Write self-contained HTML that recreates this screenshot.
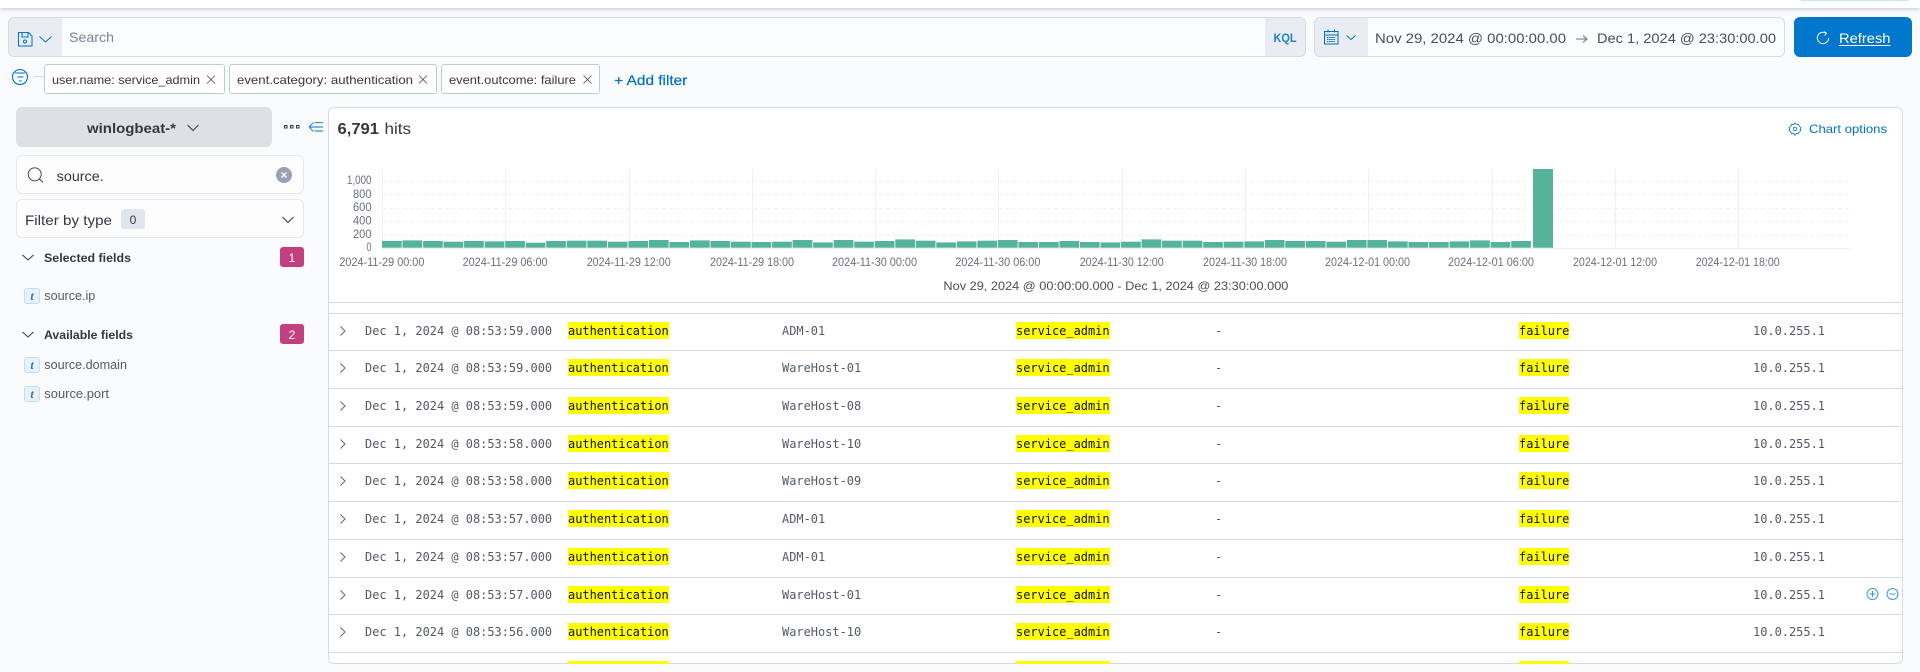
<!DOCTYPE html>
<html><head><meta charset="utf-8"><title>Discover</title>
<style>
html,body{margin:0;padding:0;width:1920px;height:672px;overflow:hidden;background:#fafbfd;font-family:"Liberation Sans",sans-serif;color:#343741}
.a{position:absolute;box-sizing:border-box}
.box{border:1px solid #d3dae6;background:#fbfcfd;border-radius:6px}
.pill{border:1px solid #c2c9d6;background:#fff;border-radius:3px;top:64px;height:30px}
.side{border:1px solid #e4e8f0;background:#fdfdfe;border-radius:6px;left:16px;width:288px}
.badge{left:280px;width:24px;height:20px;background:#c4407c;border-radius:3px}
.t{left:24px;width:16px;height:16px;background:#e6f1fa;border:1px solid #c5dcee;border-radius:3px}
.row{left:329px;width:1573px;height:38px;border-top:1px solid #d3dae6;font:11.96px/19px "DejaVu Sans Mono","Liberation Mono",monospace;color:#535966}
.row span{position:absolute;top:8px;white-space:pre;height:19px}
.row mark{display:inline-block;height:17px;line-height:19px;background:#ff0;color:#111;vertical-align:top;overflow:hidden}
.c1{left:36px}.c2{left:239px}.c3{left:453px}.c4{left:687px}.c5{left:886px}.c6{left:1190px}.c7{left:1424px}
svg text{font-family:"Liberation Sans",sans-serif}
</style></head><body>

<div class="a" style="left:0;top:0;width:1920px;height:8px;background:#fff;box-shadow:0 1px 4px rgba(120,130,160,.45)"></div>
<div class="a" style="left:1801px;top:0;width:108px;height:1px;background:#cce4f5"></div>

<div class="a box" style="left:8px;top:17px;width:1298px;height:40px;overflow:hidden">
  <div class="a" style="left:0;top:0;width:53px;height:40px;background:#e9edf3"></div>
  <div class="a" style="right:0;top:0;width:40px;height:40px;background:#e9edf3"></div>
</div>
<div class="a box" style="left:1314px;top:17px;width:471px;height:40px;overflow:hidden">
  <div class="a" style="left:0;top:0;width:53px;height:40px;background:#e9edf3"></div>
</div>
<div class="a" style="left:1794px;top:17px;width:118px;height:40px;background:#0077cc;border-radius:6px"></div>

<div class="a pill" style="left:44px;width:181px"></div>
<div class="a pill" style="left:229px;width:208px"></div>
<div class="a pill" style="left:441px;width:159px"></div>

<div class="a" style="left:16px;top:107px;width:256px;height:40px;background:#dfe0e4;border-radius:6px"></div>
<div class="a side" style="top:155px;height:39px"></div>
<div class="a side" style="top:199px;height:39px"></div>
<div class="a" style="left:121px;top:209px;width:24px;height:20px;background:#e0e5ee;border-radius:3px"></div>
<div class="a badge" style="top:247px"></div>
<div class="a badge" style="top:324px"></div>
<div class="a t" style="top:288px"></div>
<div class="a t" style="top:357px"></div>
<div class="a t" style="top:386px"></div>

<div class="a" style="left:328px;top:107px;width:1575px;height:557px;background:#fff;border:1px solid #d3dae6;border-radius:6px;overflow:hidden">
  <div class="a" style="left:0;top:194px;width:1573px;height:1px;background:#d3dae6"></div>
</div>

<div class="a row" style="top:313px"><span class="c1">Dec 1, 2024 @ 08:53:59.000</span><span class="c2"><mark>authentication</mark></span><span class="c3">ADM-01</span><span class="c4"><mark>service_admin</mark></span><span class="c5">-</span><span class="c6"><mark>failure</mark></span><span class="c7">10.0.255.1</span></div>
<div class="a row" style="top:350px"><span class="c1">Dec 1, 2024 @ 08:53:59.000</span><span class="c2"><mark>authentication</mark></span><span class="c3">WareHost-01</span><span class="c4"><mark>service_admin</mark></span><span class="c5">-</span><span class="c6"><mark>failure</mark></span><span class="c7">10.0.255.1</span></div>
<div class="a row" style="top:388px"><span class="c1">Dec 1, 2024 @ 08:53:59.000</span><span class="c2"><mark>authentication</mark></span><span class="c3">WareHost-08</span><span class="c4"><mark>service_admin</mark></span><span class="c5">-</span><span class="c6"><mark>failure</mark></span><span class="c7">10.0.255.1</span></div>
<div class="a row" style="top:426px"><span class="c1">Dec 1, 2024 @ 08:53:58.000</span><span class="c2"><mark>authentication</mark></span><span class="c3">WareHost-10</span><span class="c4"><mark>service_admin</mark></span><span class="c5">-</span><span class="c6"><mark>failure</mark></span><span class="c7">10.0.255.1</span></div>
<div class="a row" style="top:463px"><span class="c1">Dec 1, 2024 @ 08:53:58.000</span><span class="c2"><mark>authentication</mark></span><span class="c3">WareHost-09</span><span class="c4"><mark>service_admin</mark></span><span class="c5">-</span><span class="c6"><mark>failure</mark></span><span class="c7">10.0.255.1</span></div>
<div class="a row" style="top:501px"><span class="c1">Dec 1, 2024 @ 08:53:57.000</span><span class="c2"><mark>authentication</mark></span><span class="c3">ADM-01</span><span class="c4"><mark>service_admin</mark></span><span class="c5">-</span><span class="c6"><mark>failure</mark></span><span class="c7">10.0.255.1</span></div>
<div class="a row" style="top:539px"><span class="c1">Dec 1, 2024 @ 08:53:57.000</span><span class="c2"><mark>authentication</mark></span><span class="c3">ADM-01</span><span class="c4"><mark>service_admin</mark></span><span class="c5">-</span><span class="c6"><mark>failure</mark></span><span class="c7">10.0.255.1</span></div>
<div class="a row" style="top:577px"><span class="c1">Dec 1, 2024 @ 08:53:57.000</span><span class="c2"><mark>authentication</mark></span><span class="c3">WareHost-01</span><span class="c4"><mark>service_admin</mark></span><span class="c5">-</span><span class="c6"><mark>failure</mark></span><span class="c7">10.0.255.1</span></div>
<div class="a row" style="top:614px"><span class="c1">Dec 1, 2024 @ 08:53:56.000</span><span class="c2"><mark>authentication</mark></span><span class="c3">WareHost-10</span><span class="c4"><mark>service_admin</mark></span><span class="c5">-</span><span class="c6"><mark>failure</mark></span><span class="c7">10.0.255.1</span></div>
<div class="a" style="left:329px;top:652px;width:1573px;height:1px;background:#d3dae6"></div>
<div class="a" style="left:568px;top:661px;width:101px;height:2.5px;background:#ff0"></div>
<div class="a" style="left:1016px;top:661px;width:94px;height:2.5px;background:#ff0"></div>
<div class="a" style="left:1519px;top:661px;width:50px;height:2.5px;background:#ff0"></div>

<svg class="a" style="left:0;top:0" width="1920" height="672" viewBox="0 0 1920 672">
  <!-- top bar text -->
  <text x="69" y="42" font-size="14" fill="#7b8494" textLength="45" lengthAdjust="spacingAndGlyphs">Search</text>
  <text x="1273.5" y="42" font-size="12" font-weight="700" fill="#1f7fc4" textLength="23" lengthAdjust="spacingAndGlyphs">KQL</text>
  <text x="1375" y="43" font-size="14" fill="#4a4e59" textLength="191" lengthAdjust="spacingAndGlyphs">Nov 29, 2024 @ 00:00:00.00</text>
  <text x="1597" y="43" font-size="14" fill="#4a4e59" textLength="179" lengthAdjust="spacingAndGlyphs">Dec 1, 2024 @ 23:30:00.00</text>
  <path d="M1576 39h11m-4-3.500 4 3.500-4 3.500" fill="none" stroke="#69707d" stroke-width="1"/>
  <text x="1839" y="43" font-size="14" fill="#fff" textLength="51.500" lengthAdjust="spacingAndGlyphs">Refresh</text>
  <rect x="1839" y="45" width="51.500" height="1" fill="#fff"/>
  <path d="M1826.200 33.200a5.700 5.700 0 1 0 2.500 4.800" fill="none" stroke="#fff" stroke-width="1"/>
  <path d="M1824 31.500l2.400 1.700-1.800 2.300" fill="none" stroke="#fff" stroke-width="1"/>

  <!-- save icon -->
  <path d="M18.500 32.500h10l3.500 3.500v10h-13.500z M22 32.500v4.500h6v-4.500" fill="none" stroke="#0071c2" stroke-width="1"/>
  <circle cx="25" cy="41.500" r="1.500" fill="none" stroke="#0071c2" stroke-width="1"/>
  <path d="M39.500 36.500l6 5.500 6-5.500" fill="none" stroke="#0071c2" stroke-width="1"/>

  <!-- calendar icon -->
  <path d="M1324.500 31.500h13.500v12.500h-13.500z M1324.500 35h13.500" fill="none" stroke="#0071c2" stroke-width="1"/>
  <path d="M1328 29.500v3 M1334.500 29.500v3" stroke="#0071c2" stroke-width="1"/>
  <path d="M1327 37.500h8.500 M1327 39.500h8.500 M1327 41.500h8.500" stroke="#0071c2" stroke-width="1" stroke-dasharray="1.500 .6"/>
  <path d="M1346.500 35.500l4.500 4 4.500-4" fill="none" stroke="#0071c2" stroke-width="1"/>

  <!-- filter row -->
  <circle cx="20" cy="77" r="7.500" fill="none" stroke="#0071c2" stroke-width="1.100"/>
  <path d="M15 73h10 M17.300 77h6 M19 81h2.700" stroke="#0071c2" stroke-width="1.100"/>
  <path d="M34 76.500h10" stroke="#d3dae6" stroke-width="1"/>
  <text x="52" y="84" font-size="12" fill="#343741" textLength="148" lengthAdjust="spacingAndGlyphs">user.name: service_admin</text>
  <path d="M207 75.500l8 8m0-8l-8 8" stroke="#343741" stroke-width=".7"/>
  <text x="237" y="84" font-size="12" fill="#343741" textLength="176" lengthAdjust="spacingAndGlyphs">event.category: authentication</text>
  <path d="M419 75.500l8 8m0-8l-8 8" stroke="#343741" stroke-width=".7"/>
  <text x="449" y="84" font-size="12" fill="#343741" textLength="127" lengthAdjust="spacingAndGlyphs">event.outcome: failure</text>
  <path d="M583.500 75.500l8 8m0-8l-8 8" stroke="#343741" stroke-width=".7"/>
  <text x="614.300" y="85" font-size="14" font-weight="400" fill="#0071c2" stroke="#0071c2" stroke-width=".25" textLength="73" lengthAdjust="spacingAndGlyphs">+ Add filter</text>

  <!-- sidebar -->
  <text x="87" y="133" font-size="14" font-weight="700" fill="#343741" textLength="89" lengthAdjust="spacingAndGlyphs">winlogbeat-*</text>
  <path d="M187.500 125l5.500 5.500 5.500-5.500" fill="none" stroke="#343741" stroke-width="1"/>
  <path d="M284.500 125.500h2.500v2.500h-2.500z M290.500 125.500h2.500v2.500h-2.500z M296.500 125.500h2.500v2.500h-2.500z" fill="none" stroke="#343741" stroke-width="1"/>
  <path d="M313.500 122.500l-4.300 4.500 4.300 4.500 M310 127h13 M314.500 122.700h8.500 M314.500 131h8.500" fill="none" stroke="#0071c2" stroke-width=".9"/>
  <circle cx="34.700" cy="174.300" r="6.500" fill="none" stroke="#343741" stroke-width=".9"/>
  <path d="M39.500 179l3.500 3.500" stroke="#343741" stroke-width=".9"/>
  <text x="56.700" y="181" font-size="14" fill="#343741" textLength="47" lengthAdjust="spacingAndGlyphs">source.</text>
  <circle cx="284" cy="175" r="8" fill="#98a2b3"/>
  <path d="M281.500 172.500l5 5m0-5l-5 5" stroke="#fff" stroke-width="1.300"/>
  <text x="25" y="225" font-size="14" fill="#343741" textLength="87" lengthAdjust="spacingAndGlyphs">Filter by type</text>
  <text x="133" y="224" font-size="12" font-weight="400" fill="#343741" text-anchor="middle">0</text>
  <path d="M282.500 217l5.500 5.500 5.500-5.500" fill="none" stroke="#343741" stroke-width="1"/>
  <path d="M22.500 255l5.500 5 5.500-5" fill="none" stroke="#343741" stroke-width="1"/>
  <text x="44" y="262" font-size="12" font-weight="700" fill="#343741" textLength="87" lengthAdjust="spacingAndGlyphs">Selected fields</text>
  <text x="292" y="262" font-size="12" fill="#fff" text-anchor="middle">1</text>
  <text x="32" y="300" font-size="12" font-style="italic" font-weight="700" fill="#44719a" text-anchor="middle" style="font-family:'Liberation Serif',serif">t</text>
  <text x="44.300" y="300" font-size="13" fill="#535966" textLength="51" lengthAdjust="spacingAndGlyphs">source.ip</text>
  <path d="M22.500 332l5.500 5 5.500-5" fill="none" stroke="#343741" stroke-width="1"/>
  <text x="44" y="339" font-size="12" font-weight="700" fill="#343741" textLength="89" lengthAdjust="spacingAndGlyphs">Available fields</text>
  <text x="292" y="339" font-size="12" fill="#fff" text-anchor="middle">2</text>
  <text x="32" y="369" font-size="12" font-style="italic" font-weight="700" fill="#44719a" text-anchor="middle" style="font-family:'Liberation Serif',serif">t</text>
  <text x="44.300" y="369" font-size="13" fill="#535966" textLength="82.700" lengthAdjust="spacingAndGlyphs">source.domain</text>
  <text x="32" y="398" font-size="12" font-style="italic" font-weight="700" fill="#44719a" text-anchor="middle" style="font-family:'Liberation Serif',serif">t</text>
  <text x="44.300" y="398" font-size="13" fill="#535966" textLength="64.700" lengthAdjust="spacingAndGlyphs">source.port</text>

  <!-- hits header -->
  <text x="337.500" y="134" font-size="16" font-weight="700" fill="#343741" textLength="41.500" lengthAdjust="spacingAndGlyphs">6,791</text>
  <text x="384.500" y="134" font-size="16" fill="#343741" textLength="26.500" lengthAdjust="spacingAndGlyphs">hits</text>
  <circle cx="1795" cy="129" r="1.800" fill="none" stroke="#0071c2" stroke-width=".8"/>
  <path d="M1795 122.800l1.300 1.800 2.100-.3 .9 2 1.700 1.300-.9 1.400 .9 1.400-1.700 1.300-.9 2-2.100-.3-1.300 1.800-1.300-1.800-2.100 .3-.9-2-1.700-1.300 .9-1.400-.9-1.400 1.700-1.300 .9-2 2.100 .3z" fill="none" stroke="#0071c2" stroke-width=".8"/>
  <text x="1809" y="133" font-size="12" fill="#0071c2" textLength="78" lengthAdjust="spacingAndGlyphs">Chart options</text>

  <!-- chart grid -->
  <g stroke="#eef0f3" stroke-width="1">
    <path d="M382.500 169v79 M505.500 169v79 M629.500 169v79 M752.500 169v79 M875.500 169v79 M998.500 169v79 M1122.500 169v79 M1245.500 169v79 M1368.500 169v79 M1492.500 169v79 M1615.500 169v79 M1738.500 169v79"/>
    <path d="M382 181.500h1469 M382 194.500h1469 M382 208.500h1469 M382 221.500h1469 M382 235.500h1469" stroke-dasharray="4 3"/>
    <path d="M382 248.500h1469" stroke-width="1.200"/>
  </g>
  <g fill="#54b399" transform="translate(0,247.700) scale(1,-1)">
    <rect x="382" width="19.700" height="6.700"/><rect x="402.500" width="19.700" height="7.300"/><rect x="423.100" width="19.700" height="6.700"/><rect x="443.600" width="19.700" height="6"/><rect x="464.100" width="19.700" height="6.700"/><rect x="484.700" width="19.700" height="6.300"/><rect x="505.200" width="19.700" height="6.700"/><rect x="525.700" width="19.700" height="5"/><rect x="546.200" width="19.700" height="6.700"/><rect x="566.800" width="19.700" height="7"/><rect x="587.300" width="19.700" height="7"/><rect x="607.800" width="19.700" height="6"/><rect x="628.400" width="19.700" height="6.700"/><rect x="648.900" width="19.700" height="7.700"/><rect x="669.400" width="19.700" height="5.700"/><rect x="690" width="19.700" height="7.300"/><rect x="710.500" width="19.700" height="6.700"/><rect x="731" width="19.700" height="6"/><rect x="751.500" width="19.700" height="5.700"/><rect x="772.100" width="19.700" height="6"/><rect x="792.600" width="19.700" height="7.700"/><rect x="813.100" width="19.700" height="5.300"/><rect x="833.700" width="19.700" height="7.700"/><rect x="854.200" width="19.700" height="6"/><rect x="874.700" width="19.700" height="6.700"/><rect x="895.300" width="19.700" height="8.300"/><rect x="915.800" width="19.700" height="7"/><rect x="936.300" width="19.700" height="5.300"/><rect x="956.800" width="19.700" height="6.300"/><rect x="977.400" width="19.700" height="7"/><rect x="997.900" width="19.700" height="7.700"/><rect x="1018.400" width="19.700" height="5.700"/><rect x="1039" width="19.700" height="5.700"/><rect x="1059.500" width="19.700" height="6.700"/><rect x="1080" width="19.700" height="5.700"/><rect x="1100.600" width="19.700" height="5.300"/><rect x="1121.100" width="19.700" height="6"/><rect x="1141.600" width="19.700" height="8.300"/><rect x="1162.100" width="19.700" height="7"/><rect x="1182.700" width="19.700" height="7"/><rect x="1203.200" width="19.700" height="5.700"/><rect x="1223.700" width="19.700" height="6"/><rect x="1244.300" width="19.700" height="6.300"/><rect x="1264.800" width="19.700" height="7.700"/><rect x="1285.300" width="19.700" height="6.700"/><rect x="1305.900" width="19.700" height="6.700"/><rect x="1326.400" width="19.700" height="6"/><rect x="1346.900" width="19.700" height="7.700"/><rect x="1367.400" width="19.700" height="7.700"/><rect x="1388" width="19.700" height="6.300"/><rect x="1408.500" width="19.700" height="5.700"/><rect x="1429" width="19.700" height="5.700"/><rect x="1449.600" width="19.700" height="6.300"/><rect x="1470.100" width="19.700" height="7.300"/><rect x="1490.600" width="19.700" height="5.700"/><rect x="1511.200" width="19.700" height="6.700"/><rect x="1533" width="20" height="78.700"/>
  </g>
  <g font-size="11.500" fill="#69707d">
    <text x="347" y="184" textLength="24.500" lengthAdjust="spacingAndGlyphs">1,000</text>
    <text x="353" y="198" textLength="18.500" lengthAdjust="spacingAndGlyphs">800</text>
    <text x="353" y="211" textLength="18.500" lengthAdjust="spacingAndGlyphs">600</text>
    <text x="353" y="224.500" textLength="18.500" lengthAdjust="spacingAndGlyphs">400</text>
    <text x="353" y="238" textLength="18.500" lengthAdjust="spacingAndGlyphs">200</text>
    <text x="366.500" y="251" textLength="5" lengthAdjust="spacingAndGlyphs">0</text>
    <text x="339.400" y="266" textLength="85" lengthAdjust="spacingAndGlyphs">2024-11-29 00:00</text>
    <text x="462.600" y="266" textLength="85" lengthAdjust="spacingAndGlyphs">2024-11-29 06:00</text>
    <text x="586.700" y="266" textLength="84" lengthAdjust="spacingAndGlyphs">2024-11-29 12:00</text>
    <text x="710" y="266" textLength="84" lengthAdjust="spacingAndGlyphs">2024-11-29 18:00</text>
    <text x="832" y="266" textLength="85" lengthAdjust="spacingAndGlyphs">2024-11-30 00:00</text>
    <text x="955.400" y="266" textLength="85" lengthAdjust="spacingAndGlyphs">2024-11-30 06:00</text>
    <text x="1079.700" y="266" textLength="84" lengthAdjust="spacingAndGlyphs">2024-11-30 12:00</text>
    <text x="1203" y="266" textLength="84" lengthAdjust="spacingAndGlyphs">2024-11-30 18:00</text>
    <text x="1325" y="266" textLength="85" lengthAdjust="spacingAndGlyphs">2024-12-01 00:00</text>
    <text x="1448" y="266" textLength="86" lengthAdjust="spacingAndGlyphs">2024-12-01 06:00</text>
    <text x="1573" y="266" textLength="84" lengthAdjust="spacingAndGlyphs">2024-12-01 12:00</text>
    <text x="1695.700" y="266" textLength="84" lengthAdjust="spacingAndGlyphs">2024-12-01 18:00</text>
  </g>
  <text x="943.400" y="290" font-size="12" fill="#4a4e59" textLength="345" lengthAdjust="spacingAndGlyphs">Nov 29, 2024 @ 00:00:00.000 - Dec 1, 2024 @ 23:30:00.000</text>

  <!-- row chevrons -->
  <g fill="none" stroke="#5f6673" stroke-width="1">
    <path d="M340.500 326.500l4.500 4.500-4.500 4.500 M340.500 363.500l4.500 4.500-4.500 4.500 M340.500 401.500l4.500 4.500-4.500 4.500 M340.500 439.500l4.500 4.500-4.500 4.500 M340.500 476.500l4.500 4.500-4.500 4.500 M340.500 514.500l4.500 4.500-4.500 4.500 M340.500 552.500l4.500 4.500-4.500 4.500 M340.500 590.500l4.500 4.500-4.500 4.500 M340.500 627.500l4.500 4.500-4.500 4.500"/>
  </g>
  <!-- hover actions -->
  <circle cx="1872.500" cy="594" r="5.500" fill="none" stroke="#3d9be0" stroke-width="1"/>
  <path d="M1869.500 594h6 M1872.500 591v6" stroke="#3d9be0" stroke-width="1"/>
  <circle cx="1892.500" cy="594" r="5.500" fill="none" stroke="#3d9be0" stroke-width="1"/>
  <path d="M1889.500 594h6" stroke="#3d9be0" stroke-width="1"/>
</svg>
</body></html>
